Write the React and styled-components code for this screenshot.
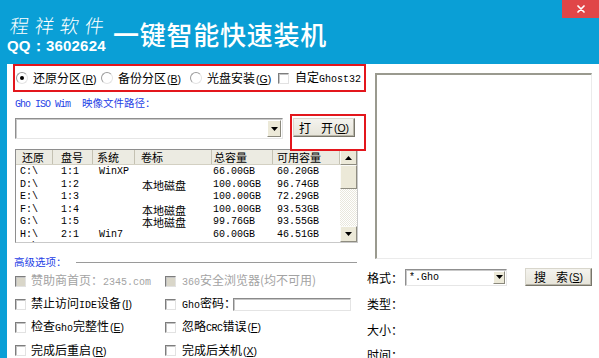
import React from 'react';
import styled, { createGlobalStyle } from 'styled-components';

const BLUE = '#0a9fd6';
const RED = '#e3161c';
const LINK = '#1f3fe6';
const BEIGE = '#ece9d8';
const CJK = '"Noto Sans CJK SC", "Noto Sans", sans-serif';
const MONO = '"Liberation Mono", "DejaVu Sans Mono", monospace';

const Global = createGlobalStyle`
  *, *::before, *::after { box-sizing: border-box; }
  html, body { margin: 0; padding: 0; background: #fff; }
  body { width: 599px; height: 358px; overflow: hidden; font-family: ${CJK}; font-size: 12px; color: #000; }
  #root { width: 599px; height: 358px; }
`;

const Window = styled.div`
  width: 599px;
  height: 358px;
  display: flex;
  flex-direction: column;
  background: #fff;
  overflow: hidden;
`;

const Header = styled.header`
  height: 64px;
  flex-shrink: 0;
  background: ${BLUE};
  display: flex;
  align-items: flex-start;
`;

const Brand = styled.div`
  width: 100px;
  flex-shrink: 0;
  margin-left: 7px;
  padding-top: 13px;
  display: flex;
  flex-direction: column;
  color: #fff;
`;

const BrandName = styled.div`
  font-family: ${CJK};
  font-size: 19px;
  line-height: 24px;
  font-weight: 300;
  letter-spacing: 6px;
  padding-left: 3px;
  white-space: nowrap;
  transform: skewX(-8deg);
`;

const BrandQQ = styled.div`
  margin-top: 1px;
  font-family: "Liberation Sans", Arial, sans-serif;
  font-weight: 700;
  font-size: 15px;
  line-height: 16px;
  letter-spacing: 0.2px;
  white-space: nowrap;
`;

const Title = styled.h1`
  margin: 19px 0 0 6px;
  font-family: ${CJK};
  font-weight: 500;
  font-size: 26px;
  line-height: 30px;
  letter-spacing: 0.75px;
  color: #fff;
  white-space: nowrap;
`;

const Close = styled.div`
  margin-left: auto;
  width: 37px;
  height: 18px;
  background: #e04648;
  display: flex;
  align-items: center;
  justify-content: center;
`;

const Main = styled.div`
  flex: 1;
  display: flex;
  border-left: 7px solid ${BLUE};
  min-height: 0;
`;

const LeftCol = styled.div`
  width: 358px;
  flex-shrink: 0;
  display: flex;
  flex-direction: column;
  & > * { flex-shrink: 0; }
`;

const RightCol = styled.div`
  flex: 1;
  display: flex;
  flex-direction: column;
  & > * { flex-shrink: 0; }
`;

const RadioBox = styled.div`
  margin-left: 6px;
  width: 353px;
  height: 28px;
  border: 2px solid ${RED};
  padding-left: 1px;
  display: grid;
  grid-template-columns: 85px 89px 88px 1fr;
  align-items: center;
`;

const Choice = styled.label`
  display: flex;
  align-items: center;
  gap: ${p => p.$gap || 5}px;
  font-size: 12px;
  line-height: 14px;
  white-space: nowrap;
  color: ${p => (p.$disabled ? '#a3a3a3' : '#000')};
`;

const Radio = styled.span`
  width: 12px;
  height: 12px;
  border-radius: 50%;
  border: 1px solid;
  border-color: #9c9c9c #e4e4e4 #e4e4e4 #9c9c9c;
  background: #fff;
  display: flex;
  align-items: center;
  justify-content: center;
  flex-shrink: 0;
  &::after {
    content: '';
    width: 4px;
    height: 4px;
    border-radius: 50%;
    background: ${p => (p.$on ? '#000' : 'transparent')};
  }
`;

const Check = styled.span`
  width: 11px;
  height: 11px;
  flex-shrink: 0;
  border: 1px solid;
  border-color: #7d7d7d #e2e2e2 #e2e2e2 #7d7d7d;
  box-shadow: inset 1px 1px 0 #c4c4c4;
  background: ${p => (p.$disabled ? '#d9d6c9' : '#fff')};
`;

const Ascii = styled.span`
  font-family: ${MONO};
  font-size: ${p => p.$size || 10}px;
  letter-spacing: ${p => p.$ls || 0}px;
`;

const Colon = styled.span`
  letter-spacing: -9px;
`;

const Key = styled.span`
  font-family: "Liberation Sans", Arial, sans-serif;
  font-size: 10.5px;
  margin-left: 1px;
  u { text-underline-offset: 1px; }
`;

const PathLabel = styled.div`
  margin: 5px 0 0 8px;
  line-height: 12px;
  height: 12px;
  font-size: 10.5px;
  color: ${LINK};
  white-space: nowrap;
`;

const Gap = styled.span`
  display: inline-block;
  width: ${p => p.$w}px;
`;

const ComboRow = styled.div`
  margin: 9px 0 0 8px;
  display: flex;
  align-items: flex-start;
`;

const Combo = styled.div`
  width: ${p => p.$w}px;
  height: ${p => p.$h}px;
  flex-shrink: 0;
  border: 1px solid;
  border-color: #8f8f8f #e6e6e6 #e6e6e6 #8f8f8f;
  box-shadow: inset 1px 1px 0 #c9c9c9;
  background: #fff;
  display: flex;
  align-items: center;
  padding: 1px 1px 1px 3px;
`;

const ComboText = styled.span`
  flex: 1;
  font-family: ${MONO};
  font-size: 10px;
`;

const DropBtn = styled.span`
  width: ${p => p.$w || 13}px;
  height: 100%;
  background: ${BEIGE};
  border: 1px solid;
  border-color: #fff #8a887c #8a887c #fff;
  display: flex;
  align-items: center;
  justify-content: center;
`;

const OpenWrap = styled.div`
  position: relative;
  margin-left: 10px;
  &::after {
    content: '';
    position: absolute;
    left: -3px;
    top: -4px;
    right: -11px;
    bottom: -14px;
    border: 2px solid ${RED};
    z-index: 2;
    pointer-events: none;
  }
`;

const Button = styled.div`
  width: ${p => p.$w}px;
  height: ${p => p.$h}px;
  flex-shrink: 0;
  background: linear-gradient(#f4f3ee, #e6e4d9);
  border: 1px solid;
  border-color: #d8d6cc #77756a #77756a #d8d6cc;
  box-shadow: inset -1px -1px 0 #b8b5a8;
  display: flex;
  align-items: center;
  justify-content: center;
  font-size: 12px;
  line-height: 14px;
  white-space: nowrap;
`;

const Table = styled.div`
  margin: 10px 0 0 8px;
  width: 343px;
  height: 94px;
  border: 1px solid;
  border-color: #8e8e8e #c9c9c9 #c9c9c9 #8e8e8e;
  display: flex;
  background: #fff;
`;

const ListArea = styled.div`
  flex: 1;
  display: flex;
  flex-direction: column;
  overflow: hidden;
`;

const COLS = '37px 40px 42px 77px 61px 67px';

const HeadRow = styled.div`
  height: 15px;
  flex-shrink: 0;
  display: grid;
  grid-template-columns: ${COLS};
  background: #ecebe2;
  border-bottom: 1px solid #d3d0c2;
`;

const HeadCell = styled.div`
  padding-left: ${p => p.$pad}px;
  border-right: 1px solid #c4c1b2;
  font-size: 11px;
  line-height: 14px;
  white-space: nowrap;
`;

const Body = styled.div`
  flex: 1;
  overflow: hidden;
  padding-top: 1px;
`;

const Row = styled.div`
  height: 12.5px;
  display: grid;
  grid-template-columns: ${COLS};
  align-items: center;
`;

const Cell = styled.div`
  padding-left: ${p => p.$pad}px;
  white-space: nowrap;
  font-family: ${p => (p.$cjk ? CJK : MONO)};
  font-size: ${p => (p.$cjk ? 11 : 10)}px;
  line-height: 12px;
`;

const ScrollBar = styled.div`
  width: 17px;
  flex-shrink: 0;
  display: flex;
  flex-direction: column;
  background-color: #f6f5f0;
  background-image: repeating-conic-gradient(#ffffff 0 25%, #e9e7dc 0 50%);
  background-size: 2px 2px;
`;

const SBtn = styled.div`
  height: ${p => p.$h}px;
  flex-shrink: 0;
  background: ${BEIGE};
  border: 1px solid;
  border-color: #fbfbf8 #8e8c80 #8e8c80 #fbfbf8;
  display: flex;
  align-items: center;
  justify-content: center;
`;

const STrack = styled.div`
  flex: 1;
`;

const AdvRow = styled.div`
  margin: 12px 0 0 7px;
  height: 13px;
  display: flex;
  align-items: center;
  font-size: 10.5px;
  color: ${LINK};
  white-space: nowrap;
`;

const Rule = styled.div`
  flex: 1;
  height: 1px;
  margin: 2px 8px 0 9px;
  background: #9a9a9a;
`;

const Options = styled.div`
  margin: 2px 0 0 8px;
  display: grid;
  grid-template-columns: 150px 1fr;
  grid-auto-rows: 23px;
  align-items: center;
`;

const PwdInput = styled.span`
  width: 118px;
  height: 13px;
  margin: 0 14px 0 auto;
  border: 1px solid;
  border-color: #8a8a8a #e4e4e4 #e4e4e4 #8a8a8a;
  box-shadow: inset 1px 1px 0 #c6c6c6;
  background: #fff;
`;

const Preview = styled.div`
  margin: 9px 0 0 10px;
  width: 217px;
  height: 186px;
  background: #fff;
  border-style: solid;
  border-width: 2px 1px 1px 2px;
  border-color: #9a9a8f #ebebeb #ebebeb #9a9a8f;
`;

const FormatRow = styled.div`
  margin-top: 9px;
  padding-left: 2px;
  height: 18px;
  display: flex;
  align-items: center;
  font-size: 12px;
  white-space: nowrap;
`;

const Info = styled.div`
  margin-top: 12px;
  padding-left: 2px;
  display: flex;
  flex-direction: column;
  gap: 13.5px;
`;

const InfoLabel = styled.div`
  font-size: 12px;
  line-height: 12px;
  white-space: nowrap;
`;

const Arrow = ({ up }) => (
  <svg width="7" height="4" viewBox="0 0 7 4">
    <polygon points={up ? '0,4 7,4 3.5,0' : '0,0 7,0 3.5,4'} fill="#000" />
  </svg>
);

const CloseIcon = () => (
  <svg width="8" height="8" viewBox="0 0 8 8">
    <path d="M1 1 L7 7 M7 1 L1 7" stroke="#fff" strokeWidth="1.7" strokeLinecap="round" />
  </svg>
);

const Mn = ({ k }) => (
  <Key>
    (<u>{k}</u>)
  </Key>
);

const HEAD = [
  ['还原', 6, 4],
  ['盘号', 8, 8],
  ['系统', 4, 6],
  ['卷标', 6, 7],
  ['总容量', 2, 1],
  ['可用容量', 4, 4],
];

const ROWS = [
  ['C:\\', '1:1', 'WinXP', '', '66.00GB', '60.20GB'],
  ['D:\\', '1:2', '', '本地磁盘', '100.00GB', '96.74GB'],
  ['E:\\', '1:3', '', '', '100.00GB', '72.29GB'],
  ['F:\\', '1:4', '', '本地磁盘', '100.00GB', '93.53GB'],
  ['G:\\', '1:5', '', '本地磁盘', '99.76GB', '93.55GB'],
  ['H:\\', '2:1', 'Win7', '', '60.00GB', '46.51GB'],
  ['I:\\', '2:2', '', '本地磁盘', '40.00GB', '37.64GB'],
];

export default function App() {
  return (
    <Window>
      <Global />
      <Header>
        <Brand>
          <BrandName>程祥软件</BrandName>
          <BrandQQ>QQ：3602624</BrandQQ>
        </Brand>
        <Title>一键智能快速装机</Title>
        <Close>
          <CloseIcon />
        </Close>
      </Header>
      <Main>
        <LeftCol>
          <RadioBox>
            <Choice>
              <Radio $on />
              <span>还原分区<Mn k="R" /></span>
            </Choice>
            <Choice>
              <Radio />
              <span>备份分区<Mn k="B" /></span>
            </Choice>
            <Choice>
              <Radio />
              <span>光盘安装<Mn k="G" /></span>
            </Choice>
            <Choice $gap={6}>
              <Check />
              <span>自定<Ascii>Ghost32</Ascii></span>
            </Choice>
          </RadioBox>
          <PathLabel>
            <Ascii $size={10} $ls={-1}>Gho ISO Wim</Ascii>
            <Gap $w={12} />
            映像文件路径：
          </PathLabel>
          <ComboRow>
            <Combo $w={268} $h={21}>
              <ComboText />
              <DropBtn $w={14}>
                <Arrow />
              </DropBtn>
            </Combo>
            <OpenWrap>
              <Button $w={62} $h={19}>
                打<Gap $w={10} />开<Mn k="O" />
              </Button>
            </OpenWrap>
          </ComboRow>
          <Table>
            <ListArea>
              <HeadRow>
                {HEAD.map(([t, hp]) => (
                  <HeadCell key={t} $pad={hp}>{t}</HeadCell>
                ))}
              </HeadRow>
              <Body>
                {ROWS.map((r, i) => (
                  <Row key={i}>
                    {r.map((v, j) => (
                      <Cell key={j} $pad={HEAD[j][2]} $cjk={j === 3}>{v}</Cell>
                    ))}
                  </Row>
                ))}
              </Body>
            </ListArea>
            <ScrollBar>
              <SBtn $h={15}><Arrow up /></SBtn>
              <SBtn $h={24} />
              <STrack />
              <SBtn $h={16}><Arrow /></SBtn>
            </ScrollBar>
          </Table>
          <AdvRow>
            高级选项：
            <Rule />
          </AdvRow>
          <Options>
            <Choice $disabled>
              <Check $disabled />
              <span>赞助商首页：<Ascii>2345.com</Ascii></span>
            </Choice>
            <Choice $disabled $gap={6}>
              <Check $disabled />
              <span><Ascii>360</Ascii>安全浏览器(均不可用)</span>
            </Choice>
            <Choice>
              <Check />
              <span>禁止访问<Ascii>IDE</Ascii>设备<Mn k="I" /></span>
            </Choice>
            <Choice $gap={6}>
              <Check />
              <span><Ascii>Gho</Ascii>密码<Colon>：</Colon></span>
              <PwdInput />
            </Choice>
            <Choice>
              <Check />
              <span>检查<Ascii>Gho</Ascii>完整性<Mn k="E" /></span>
            </Choice>
            <Choice $gap={6}>
              <Check />
              <span>忽略<Ascii $ls={-0.5}>CRC</Ascii>错误<Mn k="F" /></span>
            </Choice>
            <Choice>
              <Check />
              <span>完成后重启<Mn k="R" /></span>
            </Choice>
            <Choice $gap={6}>
              <Check />
              <span>完成后关机<Mn k="X" /></span>
            </Choice>
          </Options>
        </LeftCol>
        <RightCol>
          <Preview />
          <FormatRow>
            格式：
            <Gap $w={2} />
            <Combo $w={102} $h={17}>
              <ComboText>*.Gho</ComboText>
              <DropBtn $w={12}>
                <Arrow />
              </DropBtn>
            </Combo>
            <Gap $w={18} />
            <Button $w={67} $h={18}>
              搜<Gap $w={10} />索<Mn k="S" />
            </Button>
          </FormatRow>
          <Info>
            <InfoLabel>类型：</InfoLabel>
            <InfoLabel>大小：</InfoLabel>
            <InfoLabel>时间：</InfoLabel>
          </Info>
        </RightCol>
      </Main>
    </Window>
  );
}
